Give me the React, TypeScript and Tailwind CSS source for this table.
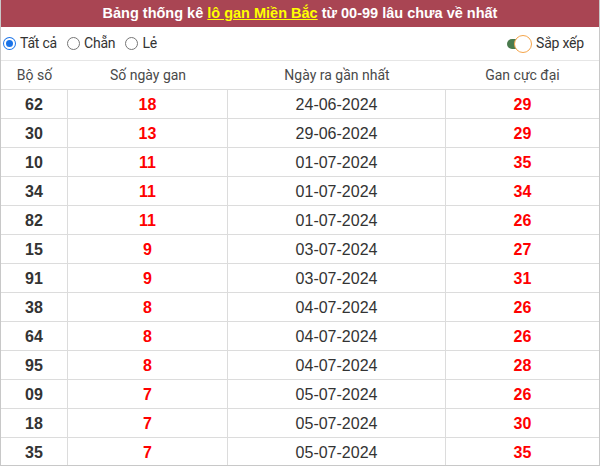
const rows: [string, string, string, string][] = [
  ['62', '18', '24-06-2024', '29'],
  ['30', '13', '29-06-2024', '29'],
  ['10', '11', '01-07-2024', '35'],
  ['34', '11', '01-07-2024', '34'],
  ['82', '11', '01-07-2024', '26'],
  ['15', '9', '03-07-2024', '27'],
  ['91', '9', '03-07-2024', '31'],
  ['38', '8', '04-07-2024', '26'],
  ['64', '8', '04-07-2024', '26'],
  ['95', '8', '04-07-2024', '28'],
  ['09', '7', '05-07-2024', '26'],
  ['18', '7', '05-07-2024', '30'],
  ['35', '7', '05-07-2024', '35'],
];

const roboto = { fontFamily: 'Roboto, "Liberation Sans", sans-serif' };

function Radio({ label, checked }: { label: string; checked?: boolean }) {
  return (
    <label className="flex items-center gap-[4px]">
      {checked ? (
        <span className="w-[13px] h-[13px] rounded-full bg-[#1a73e8] flex items-center justify-center">
          <span className="w-[11px] h-[11px] rounded-full border-2 border-white bg-[#1a73e8]" />
        </span>
      ) : (
        <span className="w-[13px] h-[13px] rounded-full border border-[#767676] bg-white" />
      )}
      <span>{label}</span>
    </label>
  );
}

export default function App() {
  return (
    <div
      className="w-[600px] h-[466px] bg-white border-x border-b border-[#c8c8c8] overflow-hidden text-[#333]"
      style={{ fontFamily: '"Liberation Sans", Arial, sans-serif' }}
    >
      <div className="h-[27px] bg-[#a94553] text-white font-bold text-[14.5px] flex items-center justify-center">
        Bảng thống kê&nbsp;<span className="text-[#ffff00] underline">lô gan Miền Bắc</span>&nbsp;từ 00-99 lâu chưa về nhất
      </div>
      <div
        className="h-[34px] flex items-center justify-between pl-[2px] pr-[15px] text-[14px] tracking-[-0.2px] border-b border-[#e6e6e6]"
        style={roboto}
      >
        <div className="flex items-center gap-[10px]">
          <Radio label="Tất cả" checked />
          <Radio label="Chẵn" />
          <Radio label="Lẻ" />
        </div>
        <div className="flex items-center">
          <div className="relative w-[25px] h-[18px] mr-[4px]">
            <span className="absolute left-0 top-[4px] w-[16px] h-[10px] rounded-full bg-[#4a7a4d]" />
            <span className="absolute right-0 top-0 w-[18px] h-[18px] rounded-full bg-white border-[1.5px] border-[#f5a54a]" />
          </div>
          <span>Sắp xếp</span>
        </div>
      </div>
      <div
        className="h-[29px] grid grid-cols-[67px_160px_218px_1fr] items-center text-[14px] text-[#4a4a4a] border-b border-[#dcdcdc]"
        style={roboto}
      >
        <div className="text-center">Bộ số</div>
        <div className="text-center">Số ngày gan</div>
        <div className="text-center">Ngày ra gần nhất</div>
        <div className="text-center">Gan cực đại</div>
      </div>
      {rows.map((r, i) => (
        <div
          key={i}
          className="h-[29px] shrink-0 grid grid-cols-[67px_160px_218px_1fr] text-[16px] border-b border-[#dcdcdc]"
        >
          <div className="flex items-center justify-center pt-[1px] font-bold text-[#333] border-r border-[#dcdcdc]">{r[0]}</div>
          <div className="flex items-center justify-center pt-[1px] font-bold text-[#ff0000] border-r border-[#dcdcdc]">{r[1]}</div>
          <div className="flex items-center justify-center pt-[1px] text-[#333] border-r border-[#dcdcdc]">{r[2]}</div>
          <div className="flex items-center justify-center pt-[1px] font-bold text-[#ff0000]">{r[3]}</div>
        </div>
      ))}
    </div>
  );
}
